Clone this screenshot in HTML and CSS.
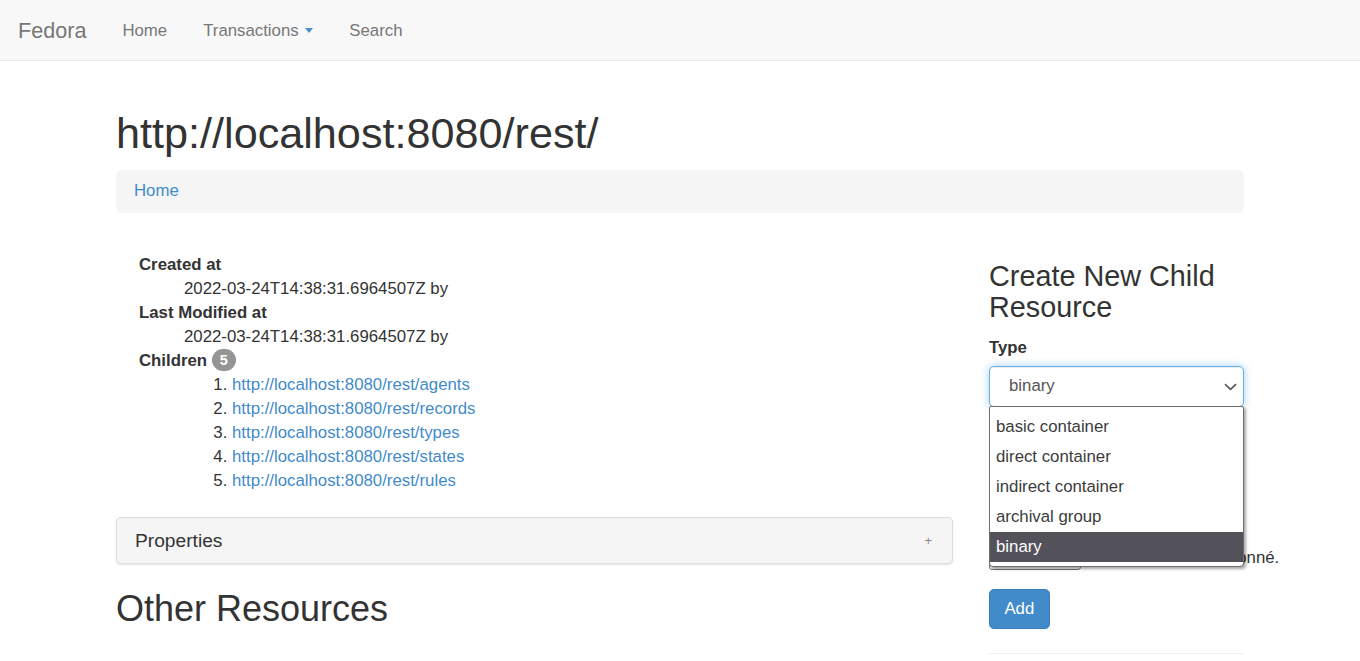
FILE: index.html
```html
<!DOCTYPE html>
<html lang="en">
<head>
<meta charset="utf-8">
<title>Fedora</title>
<link rel="stylesheet" href="styles.css">
</head>
<body>
<nav class="navbar">
  <a class="brand" href="#">Fedora</a>
  <ul class="nav">
    <li><a href="#">Home</a></li>
    <li><a href="#">Transactions <span class="caret"></span></a></li>
    <li><a href="#">Search</a></li>
  </ul>
</nav>
<div class="container">
  <h1 class="title">http://localhost:8080/rest/</h1>
  <ol class="breadcrumb"><li><a href="#">Home</a></li></ol>
  <div class="row">
    <div class="main-col">
      <dl class="meta">
        <dt>Created at</dt>
        <dd>2022-03-24T14:38:31.6964507Z by</dd>
        <dt>Last Modified at</dt>
        <dd>2022-03-24T14:38:31.6964507Z by</dd>
        <dt>Children <span class="badge">5</span></dt>
        <dd>
          <ol class="children">
            <li><a href="#">http://localhost:8080/rest/agents</a></li>
            <li><a href="#">http://localhost:8080/rest/records</a></li>
            <li><a href="#">http://localhost:8080/rest/types</a></li>
            <li><a href="#">http://localhost:8080/rest/states</a></li>
            <li><a href="#">http://localhost:8080/rest/rules</a></li>
          </ol>
        </dd>
      </dl>
      <div class="panel">
        <div class="panel-heading">
          <h4 class="panel-title">Properties</h4>
          <span class="toggle">+</span>
        </div>
      </div>
      <h2 class="section-title">Other Resources</h2>
    </div>
    <aside class="side-col">
      <h3 class="side-title">Create New Child Resource</h3>
      <form class="child-form">
        <div class="form-group">
          <label class="label">Type</label>
          <div class="select-wrap">
            <div class="select">binary</div>
            <svg class="chevron" width="13" height="8" viewBox="0 0 13 8"><path d="M1 1.2 L6.5 6.4 L12 1.2" fill="none" stroke="#555" stroke-width="1.6"/></svg>
            <ul class="select-menu">
              <li>basic container</li>
              <li>direct container</li>
              <li>indirect container</li>
              <li>archival group</li>
              <li class="selected">binary</li>
            </ul>
          </div>
        </div>
        <div class="file-row">
          <span class="file-btn">Parcourir…</span>
          <span class="file-text">Aucun fichier sélectionné.</span>
        </div>
        <button class="btn" type="button">Add</button>
      </form>
      <hr class="rule">
    </aside>
  </div>
</div>
</body>
</html>
```
FILE: styles.css
```css
* { box-sizing: border-box; }
html, body { margin: 0; padding: 0; }
body {
  font-family: "Liberation Sans", Arial, Helvetica, sans-serif;
  font-size: 16.8px;
  line-height: 24px;
  color: #333;
  background: #fff;
  overflow: hidden;
}
a { color: #428bca; text-decoration: none; }

.navbar {
  display: flex;
  align-items: center;
  height: 61px;
  background: #f8f8f8;
  border-bottom: 1px solid #e7e7e7;
}
.brand {
  color: #777;
  font-size: 21.6px;
  line-height: 24px;
  padding: 19px 18px 17px;
}
.nav {
  display: flex;
  list-style: none;
  margin: 0;
  padding: 0;
}
.nav a {
  display: block;
  color: #777;
  padding: 19px 18px 17px;
  line-height: 24px;
}
.caret {
  display: inline-block;
  width: 0;
  height: 0;
  margin-left: 2px;
  vertical-align: middle;
  border-top: 5px solid #4a8fd0;
  border-left: 4.5px solid transparent;
  border-right: 4.5px solid transparent;
  position: relative;
  top: -1px;
}

.container {
  width: 1164px;
  margin: 0 auto;
  padding: 49px 18px 0;
}
.title {
  font-size: 43.2px;
  font-weight: 400;
  line-height: 1.1;
  margin: 0 0 12px;
}
.breadcrumb {
  list-style: none;
  margin: 0 0 24px;
  padding: 9.6px 18px;
  background: #f5f5f5;
  border-radius: 4.8px;
}
.row {
  display: flex;
  margin: 0 -18px;
}
.main-col {
  width: 873px;
  padding: 0 18px;
}
.side-col {
  width: 291px;
  padding: 0 18px;
}

.meta {
  margin: 16px 0 24px;
  padding-left: 23px;
}
.meta dt { font-weight: 700; }
.meta dd { margin-left: 45px; }
.badge {
  display: inline-block;
  min-width: 24px;
  padding: 3.6px 8px;
  font-size: 14.4px;
  font-weight: 700;
  line-height: 1;
  color: #fff;
  text-align: center;
  vertical-align: middle;
  background: #959595;
  border-radius: 12px;
  position: relative;
  top: -1px;
}
.children {
  margin: 0;
  padding-left: 48px;
}

.panel {
  border: 1px solid #ddd;
  border-radius: 4.8px;
  background: #f5f5f5;
  box-shadow: 0 1px 2px rgba(0,0,0,0.12);
  margin-bottom: 24px;
}
.panel-heading {
  display: flex;
  justify-content: space-between;
  align-items: center;
  padding: 12px 18px;
}
.panel-title {
  margin: 0;
  font-size: 19.2px;
  font-weight: 400;
  line-height: 1.1;
}
.toggle {
  color: #888;
  font-size: 13px;
  line-height: 1;
  margin-right: 2px;
}
.section-title {
  font-size: 36px;
  font-weight: 400;
  line-height: 1.1;
  margin: 25px 0 12px;
}

.side-title {
  font-size: 28.8px;
  font-weight: 400;
  line-height: 1.1;
  margin: 24px 0 12px;
}
.child-form { display: flex; flex-direction: column; align-items: flex-start; }
.form-group { margin-bottom: 18px; align-self: stretch; }
.label {
  display: block;
  font-weight: 700;
  margin-bottom: 6px;
}
.select-wrap { position: relative; }
.select {
  height: 40.8px;
  padding: 7.2px 14.4px 7.2px 19px;
  border: 1px solid #66afe9;
  border-radius: 4.8px;
  color: #555;
  background: #fff;
  box-shadow: inset 0 1px 1px rgba(0,0,0,0.075), 0 0 9px rgba(102,175,233,0.6);
}
.chevron {
  position: absolute;
  right: 7px;
  top: 17px;
}
.select-menu {
  position: absolute;
  top: 40px;
  left: 0;
  width: 255px;
  margin: 0;
  padding: 5px 0 4px;
  list-style: none;
  background: #fff;
  border: 1px solid #6e6e6e;
  border-radius: 2px 2px 4px 4px;
  box-shadow: 2px 2px 3px rgba(0,0,0,0.35);
  z-index: 10;
}
.select-menu li {
  height: 30px;
  line-height: 30px;
  padding-left: 6px;
  color: #3c3c3c;
}
.select-menu li.selected {
  background: #53525b;
  color: #fff;
}
.file-row {
  display: flex;
  align-items: center;
  gap: 7px;
  margin-top: 121px;
  height: 24px;
  margin-bottom: 19px;
}
.file-btn {
  flex: 0 0 92px;
  height: 24px;
  border: 1px solid #767676;
  border-radius: 3px;
  background: #efefef;
  font-size: 14px;
  line-height: 22px;
  text-align: center;
}
.file-text { flex: 0 0 auto; white-space: nowrap; }
.btn {
  display: block;
  font-family: inherit;
  font-size: 16.8px;
  line-height: 24px;
  padding: 7.2px 14.4px;
  color: #fff;
  background: #428bca;
  border: 1px solid #357ebd;
  border-radius: 4.8px;
}
.rule {
  align-self: stretch;
  margin: 24px 0 0;
  border: 0;
  border-top: 1px solid #eee;
}
```
